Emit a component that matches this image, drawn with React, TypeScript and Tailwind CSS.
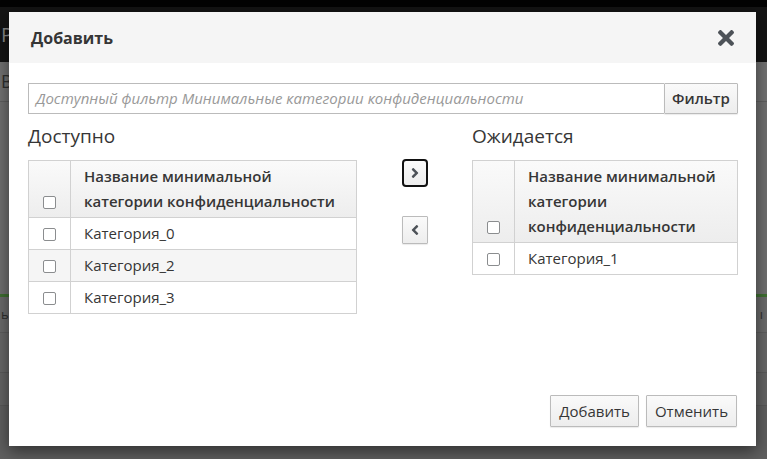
import React from "react";
import { FaAngleRight, FaAngleLeft } from "react-icons/fa";

const font = { fontFamily: '"Open Sans", "Liberation Sans", sans-serif' };

const Check = () => (
  <span className="inline-block w-[13px] h-[13px] rounded-[2px] border border-[#8b8d8f] bg-white align-middle" />
);

const CloseIcon = () => (
  <svg width="16" height="16" viewBox="0 80 352 352" fill="#4d5258">
    <path d="M242.72 256l100.07-100.07c12.28-12.28 12.28-32.19 0-44.48l-22.24-22.24c-12.28-12.28-32.19-12.28-44.48 0L176 189.28 75.93 89.21c-12.28-12.28-32.19-12.28-44.48 0L9.21 111.45c-12.28 12.28-12.28 32.19 0 44.48L109.28 256 9.21 356.07c-12.28 12.28-12.28 32.19 0 44.48l22.24 22.24c12.28 12.28 32.2 12.28 44.48 0L176 322.72l100.07 100.07c12.28 12.28 32.2 12.28 44.48 0l22.24-22.24c12.28-12.28 12.28-32.19 0-44.48L242.72 256z" />
  </svg>
);

const btn =
  "border border-[#bbbbbb] bg-gradient-to-b from-[#fafafa] to-[#ededed] text-[#363636] text-[15px] rounded-[1px] shadow-[0_1px_1px_rgba(0,0,0,0.08)]";

interface TableProps {
  rows: string[];
  width: string;
}

const PickTable = ({ rows, width }: TableProps) => (
  <table className={`${width} border-collapse border border-[#d1d1d1] text-[15px] text-[#363636]`}>
    <thead>
      <tr className="bg-gradient-to-b from-[#fafafa] to-[#ededed]">
        <th className="w-[42px] border border-[#d1d1d1] align-bottom py-[3px] leading-[25px] text-center">
          <Check />
        </th>
        <th className="border border-[#d1d1d1] align-bottom text-left font-semibold px-[13px] py-[3px] leading-[25px]">
          Название минимальной категории конфиденциальности
        </th>
      </tr>
    </thead>
    <tbody>
      {rows.map((r, i) => (
        <tr key={r} className={i % 2 === 1 ? "bg-[#f5f5f5]" : "bg-white"}>
          <td className="border border-[#d1d1d1] text-center py-[3px] leading-[25px]">
            <Check />
          </td>
          <td className="border border-[#d1d1d1] px-[13px] py-[3px] leading-[25px]">{r}</td>
        </tr>
      ))}
    </tbody>
  </table>
);

export default function App() {
  return (
    <div className="relative w-[767px] h-[459px] overflow-hidden bg-[#6c6c6c]" style={font}>
      {/* dimmed page behind the dialog */}
      <div className="flex flex-col h-full">
        <div className="h-[7px] bg-[#030303]" />
        <div className="h-[55px] bg-[#141414] flex items-center pl-[1px] text-[#8a8a8a] text-[20px]">Р</div>
        <div className="h-[40px] bg-[#717171] border-b border-[#5f5f5f] flex items-center pl-[1px] text-[#2e2e2e] text-[18px]">
          В
        </div>
        <div className="h-[192px] bg-[#6f6f6f]" />
        <div className="h-[3px] bg-[#3f6f31]" />
        <div className="h-[36px] bg-[#6a6a6a] border-b border-[#5d5d5d] flex items-center justify-between pl-[1px] pr-[1px] text-[#2e2e2e] text-[13px]">
          <span>ь</span>
          <span className="tracking-[3px]">ıı</span>
        </div>
        <div className="h-[40px] bg-[#676767] border-b border-[#5a5a5a]" />
        <div className="h-[33px] bg-[#646464] border-b border-[#585858]" />
        <div className="flex-1 bg-[#5f5f5f]" />
      </div>

      {/* dialog */}
      <div className="absolute left-[9px] top-[12px] w-[747px] h-[434px] bg-white flex flex-col shadow-[0_5px_15px_rgba(0,0,0,0.5)]">
        <div className="h-[51px] bg-[#f5f5f5] flex items-center justify-between pl-[22px] pr-[22px] shrink-0">
          <span className="text-[16px] font-bold text-[#363636]">Добавить</span>
          <CloseIcon />
        </div>

        <div className="flex-1 flex flex-col pt-[20px] pl-[19px] pr-[18px]">
          <div className="flex h-[31px]">
            <div className="flex-1 border border-[#bbbbbb] border-r-0 flex items-center px-[7px] text-[15px] italic text-[#999999]">
              Доступный фильтр Минимальные категории конфиденциальности
            </div>
            <button className={`${btn} w-[74px] h-[31px] font-semibold`}>Фильтр</button>
          </div>

          <div className="flex mt-[9px]">
            <div className="w-[329px]">
              <div className="text-[19px] text-[#363636] leading-[26px] mb-[11px]">Доступно</div>
              <PickTable width="w-[329px]" rows={["Категория_0", "Категория_2", "Категория_3"]} />
            </div>
            <div className="flex-1 flex flex-col items-center pt-[36px] gap-[29px]">
              <button className="w-[26px] h-[28px] flex items-center justify-center bg-gradient-to-b from-[#fafafa] to-[#ededed] border-2 border-[#111111] rounded-[4px] text-[#4d5258]">
                <FaAngleRight size={16} />
              </button>
              <button className="w-[26px] h-[28px] flex items-center justify-center bg-gradient-to-b from-[#fafafa] to-[#ededed] border border-[#bbbbbb] rounded-[1px] text-[#4d5258] shadow-[0_1px_1px_rgba(0,0,0,0.08)]">
                <FaAngleLeft size={16} />
              </button>
            </div>
            <div className="w-[266px]">
              <div className="text-[19px] text-[#363636] leading-[26px] mb-[11px]">Ожидается</div>
              <PickTable width="w-[266px]" rows={["Категория_1"]} />
            </div>
          </div>

          <div className="mt-auto flex justify-end gap-[7px] pb-[19px] pr-[1px]">
            <button className={`${btn} h-[32px] px-[8px] font-medium`}>Добавить</button>
            <button className={`${btn} h-[32px] px-[8px] font-medium`}>Отменить</button>
          </div>
        </div>
      </div>
    </div>
  );
}
